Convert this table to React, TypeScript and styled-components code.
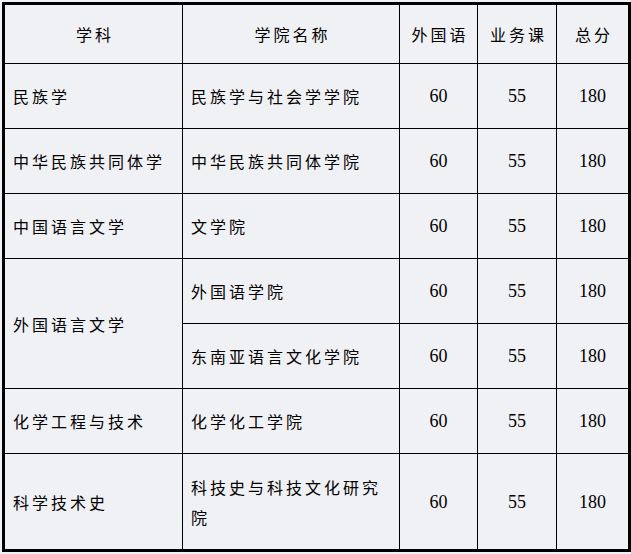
import React from "react";
import styled, { createGlobalStyle } from "styled-components";

const GlobalStyle = createGlobalStyle`
  html, body {
    margin: 0;
    padding: 0;
    background: #f0f1f5;
  }
  body {
    font-family: "Noto Sans CJK SC", "Liberation Serif", serif;
    color: #000;
  }
`;

const Page = styled.div`
  padding: 2px 0 0 2px;
`;

const Table = styled.div`
  display: grid;
  grid-template-columns: 177px 216px 77px 78px 71px;
  grid-template-rows: 58px repeat(6, 64px) 95px;
  gap: 1px;
  width: max-content;
  background: #000;
  border: 3px solid #000;
`;

const Cell = styled.div<{ $center?: boolean; $span?: number }>`
  display: flex;
  align-items: center;
  justify-content: ${(p) => (p.$center ? "center" : "flex-start")};
  padding: 0 10px 0 8px;
  background: #f0f1f5;
  font-family: "Noto Sans CJK SC", sans-serif;
  font-size: 16px;
  letter-spacing: 3px;
  line-height: 30px;
  ${(p) => (p.$span ? `grid-row: span ${p.$span};` : "")}
`;

const HeaderCell = styled(Cell).attrs({ $center: true })`
  padding: 0 0 0 3px;
`;

const NumCell = styled(Cell).attrs({ $center: true })`
  padding: 0;
  font-family: "Liberation Serif", serif;
  font-size: 18px;
  letter-spacing: 0;
`;

type Row = { subject?: string; span?: number; school: string };

const rows: Row[] = [
  { subject: "民族学", school: "民族学与社会学学院" },
  { subject: "中华民族共同体学", school: "中华民族共同体学院" },
  { subject: "中国语言文学", school: "文学院" },
  { subject: "外国语言文学", span: 2, school: "外国语学院" },
  { school: "东南亚语言文化学院" },
  { subject: "化学工程与技术", school: "化学化工学院" },
  { subject: "科学技术史", school: "科技史与科技文化研究院" },
];

const headers = ["学科", "学院名称", "外国语", "业务课", "总分"];

export default function App() {
  return (
    <>
      <GlobalStyle />
      <Page>
        <Table>
          {headers.map((h) => (
            <HeaderCell key={h}>{h}</HeaderCell>
          ))}
          {rows.map((r, i) => (
            <React.Fragment key={i}>
              {r.subject && <Cell $span={r.span}>{r.subject}</Cell>}
              <Cell>{r.school}</Cell>
              <NumCell>60</NumCell>
              <NumCell>55</NumCell>
              <NumCell>180</NumCell>
            </React.Fragment>
          ))}
        </Table>
      </Page>
    </>
  );
}
